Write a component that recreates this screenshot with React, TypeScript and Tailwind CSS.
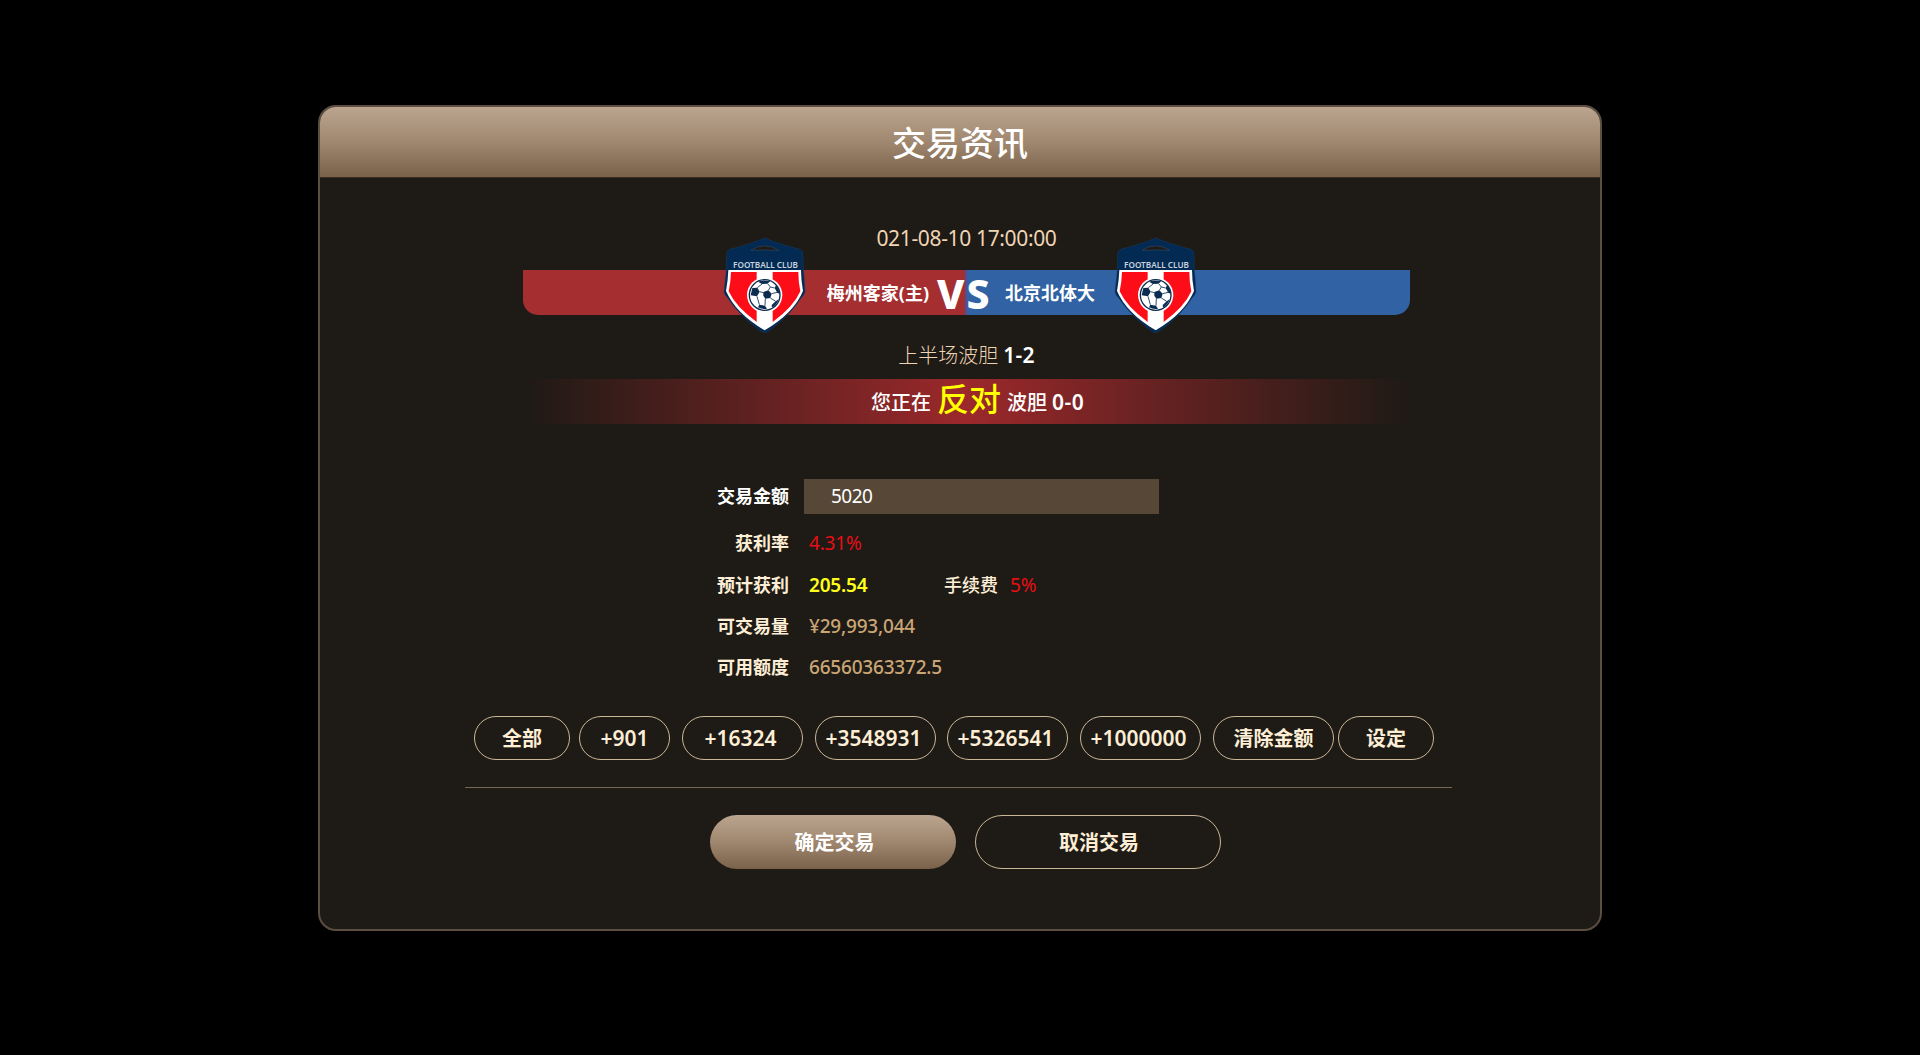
import type { ReactNode } from "react";

function Crest() {
  return (
    <svg viewBox="0 0 300 330" className="block h-[110px] w-[100px]">
      <path
        d="M150 24 Q185 40 258 59 Q264 62 264 84 Q264 120 267 140 L270 186 Q268 194 258 204 Q226 254 174 293 Q156 308 149 308 Q142 308 124 293 Q72 254 38 204 Q28 194 27 186 L32 140 Q35 120 35 84 Q35 62 41 59 Q112 40 150 24Z"
        fill="#022a53"
        stroke="#17406a"
        strokeWidth="1.5"
      />
      <path d="M108 61 Q148 34 192 61 Q150 59 108 61Z" fill="#1e1a15" stroke="#31496a" strokeWidth="2" />
      <path d="M40 120 H258 Q258 150 264 183 Q236 250 149 301 Q62 250 33 183 Q39 150 40 120Z" fill="#fff" />
      <path d="M48 126 H125 V276 Q62 230 41 184 Q47 158 48 126Z" fill="#fd0d18" />
      <path d="M250 126 H173 V276 Q236 230 256 184 Q250 158 250 126Z" fill="#fd0d18" />
      <circle cx="149" cy="195" r="53" fill="#fff" />
      <circle cx="149" cy="195" r="48" fill="#0b2b50" />
      <circle cx="149" cy="195" r="44" fill="#fff" />
      <g fill="#0b2b50">
        <path d="M145 186 L160 181 L170 191 L166 204 L151 206 L145 197Z" />
        <path d="M112 174 L127 173 L134 185 L126 199 L107 196Z" />
        <path d="M129 155 Q145 148 166 154 L157 161 L141 162Z" />
        <path d="M183 166 Q193 176 193 192 L186 187 L179 174Z" />
        <path d="M133 224 L150 227 L156 236 Q144 240 129 232Z" />
        <path d="M182 214 L191 208 Q185 226 171 233 L170 225Z" />
      </g>
      <path
        d="M134 185 L145 188 M160 181 L166 171 L158 161 M166 171 L179 174 M141 162 L127 173 M170 191 L186 187 M166 204 L182 214 M151 206 L150 227 M126 199 L133 224"
        stroke="#0b2b50"
        strokeWidth="2.5"
        fill="none"
      />
      <text
        x="151.500"
        y="115"
        textAnchor="middle"
        textLength="195"
        lengthAdjust="spacingAndGlyphs"
        fontSize="28"
        fontFamily="'Noto Sans', sans-serif"
        fontWeight="600"
        fill="#c9d2de"
      >
        FOOTBALL CLUB
      </text>
    </svg>
  );
}

function Row({ label, className, children }: { label: string; className: string; children: ReactNode }) {
  return (
    <div className={`flex items-center ${className}`}>
      <div className="w-[84px] shrink-0 text-right text-[18px] font-bold">{label}</div>
      {children}
    </div>
  );
}

function Chip({ className, children }: { className: string; children: ReactNode }) {
  return (
    <button
      className={`flex h-11 shrink-0 items-center justify-center rounded-full border border-[#c9b797] pt-0.5 font-semibold whitespace-nowrap text-[#fdeed5] ${className}`}
    >
      {children}
    </button>
  );
}

export default function App() {
  return (
    <div className="h-[1055px] w-[1920px] overflow-hidden bg-black pt-[105px] font-['Noto_Sans','Noto_Sans_CJK_SC',sans-serif]">
      <div className="ml-[318px] h-[826px] w-[1284px] overflow-hidden rounded-[18px] border-2 border-[#5c4e40] bg-[#1e1a15]">
        <header className="flex h-[71px] items-center justify-center border-b border-[#3a2c1f] bg-linear-to-b from-[#bba590] via-[#a0876f] to-[#7a6149] pt-0.5 text-[34px] font-medium text-white">
          交易资讯
        </header>

        <section className="ml-[203px] w-[887px]">
          <div className="mt-[45px] flex h-[30px] items-center justify-center pt-px text-[21px] tracking-[-0.35px] text-[#f0d5b4]">
            021-08-10 17:00:00
          </div>
          <div className="relative mt-[17px] flex h-[45px] items-center overflow-visible text-[18px] font-bold text-white">
            <div className="flex h-full w-[442px] items-center justify-end rounded-bl-[15px] bg-[#a42e30] pt-0.5 pr-[36px]">
              梅州客家(主)
            </div>
            <div className="flex h-full w-[445px] items-center rounded-br-[15px] border-l-2 border-[#5a4a92] bg-[#3162a3] pt-0.5 pl-[38px]">
              北京北体大
            </div>
            <div className="absolute top-0 left-[414px] flex h-[45px] items-center pt-0.5 text-[41px] leading-none font-extrabold tracking-[2px]">
              VS
            </div>
            <div className="absolute top-[-40px] left-[192px]">
              <Crest />
            </div>
            <div className="absolute top-[-40px] left-[583px]">
              <Crest />
            </div>
          </div>
          <div className="mt-[26px] flex h-[30px] items-center justify-center text-[20px] text-[#f0d5b4]">
            <span className="font-light">上半场波胆</span>
            <span className="ml-[5px] text-[21px] font-semibold tracking-[0.3px] text-white">1-2</span>
          </div>
          <div className="mt-2 flex h-[45px] items-center bg-linear-to-r from-transparent via-[#9c282b] to-transparent pt-0.5 pl-[348px] text-[20px] font-medium text-white">
            <span>您正在</span>
            <span className="mb-2 ml-1.5 text-[32px] leading-none text-[#ffff00]">反对</span>
            <span className="ml-1.5">波胆</span>
            <span className="ml-[5px] text-[21px] font-semibold tracking-[0.5px]">0-0</span>
          </div>
        </section>

        <section className="ml-[385px] w-[600px] pt-[55px] text-[19px] text-[#fdeed5]">
          <Row label="交易金额" className="h-[35px] text-white">
            <div className="ml-[15px] flex h-[35px] w-[355px] items-center bg-[#564737] pl-[27px] tracking-[-0.5px]">
              5020
            </div>
          </Row>
          <Row label="获利率" className="mt-[11px] h-[36px]">
            <span className="ml-5 tracking-[-0.2px] text-[#e60f15]">4.31%</span>
          </Row>
          <Row label="预计获利" className="mt-1.5 h-[36px]">
            <span className="ml-5 w-[135px] font-semibold tracking-[-0.2px] text-[#ffff1a]">205.54</span>
            <span className="text-[18px] font-medium">手续费</span>
            <span className="ml-3 tracking-[-0.2px] text-[#e60f15]">5%</span>
          </Row>
          <Row label="可交易量" className="mt-[5px] h-[36px]">
            <span className="ml-5 font-medium tracking-[-0.2px] text-[#cba675]">¥29,993,044</span>
          </Row>
          <Row label="可用额度" className="mt-[5px] h-[36px]">
            <span className="ml-5 font-medium tracking-[-0.2px] text-[#cba675]">66560363372.5</span>
          </Row>
        </section>

        <section className="mt-[31px] ml-[154px] flex">
          <Chip className="w-24 text-[20px]">全部</Chip>
          <Chip className="ml-[9px] w-[91px] text-[21px]">+901</Chip>
          <Chip className="ml-3 w-[121px] pr-1 text-[21px]">+16324</Chip>
          <Chip className="ml-3 w-[121px] pr-1 text-[21px]">+3548931</Chip>
          <Chip className="ml-[11px] w-[121px] pr-1 text-[21px]">+5326541</Chip>
          <Chip className="ml-3 w-[121px] pr-1 text-[21px]">+1000000</Chip>
          <Chip className="ml-3 w-[121px] text-[20px]">清除金额</Chip>
          <Chip className="ml-1 w-24 text-[20px]">设定</Chip>
        </section>

        <div className="mt-[27px] ml-[145px] h-px w-[987px] bg-[#786753]" />

        <section className="mt-[27px] ml-[390px] flex gap-[19px] text-[20px] font-bold">
          <button className="h-[54px] w-[246px] rounded-full bg-linear-to-b from-[#bba590] via-[#a0876f] to-[#7a6149] pt-px pl-[3px] text-white">
            确定交易
          </button>
          <button className="h-[54px] w-[246px] rounded-full border border-[#c9b797] pt-px pl-0.5 text-[#fdeed5]">
            取消交易
          </button>
        </section>
      </div>
    </div>
  );
}
